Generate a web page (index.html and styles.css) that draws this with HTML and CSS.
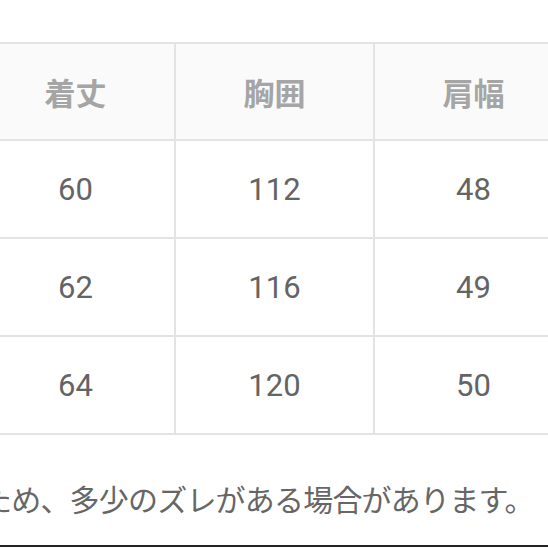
FILE: index.html
```html
<!DOCTYPE html>
<html lang="ja">
<head>
<meta charset="utf-8">
<link rel="stylesheet" href="styles.css">
</head>
<body>
<div class="page">
  <table class="size-table">
    <colgroup><col><col><col></colgroup>
    <thead>
      <tr><th>着丈</th><th>胸囲</th><th>肩幅</th></tr>
    </thead>
    <tbody>
      <tr><td>60</td><td>112</td><td>48</td></tr>
      <tr><td>62</td><td>116</td><td>49</td></tr>
      <tr><td>64</td><td>120</td><td>50</td></tr>
    </tbody>
  </table>
  <p class="note">ため、多少のズレがある場合があります。</p>
  <div class="bottom-rule"></div>
</div>
</body>
</html>
```
FILE: styles.css
```css
html, body {
  margin: 0;
  padding: 0;
  background: #ffffff;
  overflow: hidden;
}
.page {
  width: 548px;
  height: 548px;
  overflow: hidden;
  padding-top: 42px;
  box-sizing: border-box;
  font-family: Roboto, "Noto Sans CJK JP", sans-serif;
}
.size-table {
  margin-left: -25px;
  border-collapse: collapse;
  table-layout: fixed;
  width: 598px;
}
.size-table col {
  width: 199px;
}
.size-table th,
.size-table td {
  border: 2px solid #e3e3e3;
  text-align: center;
  vertical-align: middle;
  padding: 0;
  height: 96px;
}
.size-table th {
  background: #fafafa;
  color: #a5a5a5;
  font-family: "Noto Sans CJK JP", sans-serif;
  font-weight: 700;
  font-size: 31px;
  height: 95px;
}
.size-table td {
  background: #ffffff;
  color: #646464;
  font-size: 31px;
  font-weight: 400;
}
.note {
  margin: 43px 0 0 -18px;
  white-space: nowrap;
  font-family: "Noto Sans CJK JP", sans-serif;
  font-size: 30px;
  letter-spacing: -0.8px;
  line-height: 40px;
  color: #666666;
}
.bottom-rule {
  margin-top: 27px;
  border-top: 2px solid #222222;
}
```
